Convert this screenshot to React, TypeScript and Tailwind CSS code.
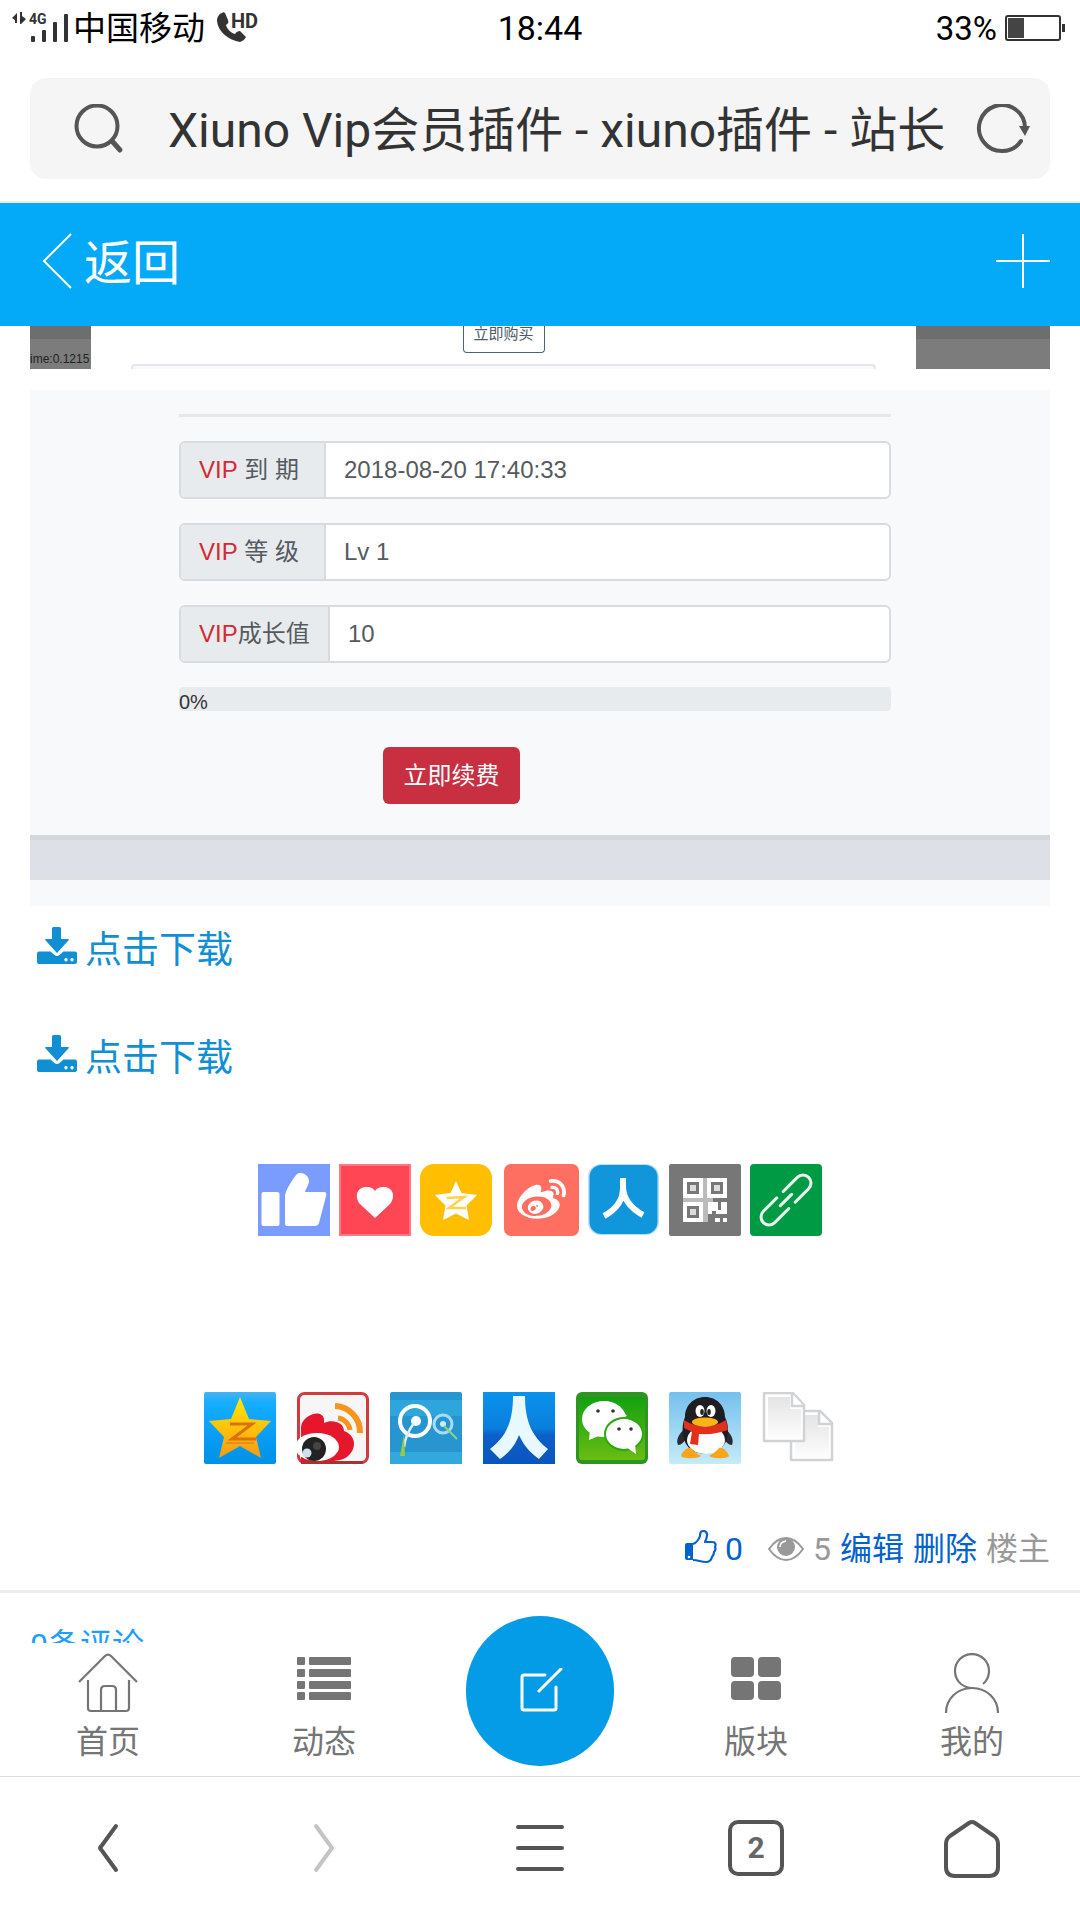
import React from "react";
import { FaWeibo } from "react-icons/fa";

const UI_FONT = "font-['Roboto','Noto_Sans_CJK_SC',sans-serif]";
const SHOT_FONT = "font-['Liberation_Sans','Noto_Sans_CJK_SC',sans-serif]";

/* ---------- status bar ---------- */

function StatusBar() {
  return (
    <div className="grid h-14 shrink-0 grid-cols-3 items-center px-3 text-[33px] leading-none text-black">
      <div className="flex items-center gap-1">
        <svg width="57" height="32" viewBox="0 0 57 32" fill="#333" aria-hidden="true">
          <path d="M0 6l5-5v10h-2v-3zM8 0h2v4l4 3-5 5H8z" />
          <text x="17" y="12" fontSize="14" fontWeight="700" fontFamily="Roboto">4G</text>
          <rect x="19" y="24" width="4" height="6" rx="1" />
          <rect x="30" y="18" width="4" height="12" rx="1" />
          <rect x="41" y="10" width="4" height="20" rx="1" />
          <rect x="52" y="2" width="4" height="28" rx="1" />
        </svg>
        <span className="whitespace-nowrap">中国移动</span>
        <svg className="ml-2" width="41" height="32" viewBox="0 0 41 32" fill="#333" aria-hidden="true">
          <path d="M5 1C2 2 0 5 0 9c1 11 12 19 23 21 3-1 5-3 6-5l-6-6c-2 0-4 1-5 3-4-1-8-5-9-9 2-1 3-3 2-5L8 1C7 0 6 0 5 1z" />
          <text x="14" y="16" fontSize="20" fontWeight="700" fontFamily="Roboto">HD</text>
        </svg>
      </div>
      <time className="text-center text-[34px]">18:44</time>
      <div className="flex items-center justify-end gap-2">
        <span>33%</span>
        <svg className="mr-0.5" width="61" height="26" viewBox="0 0 61 26" aria-hidden="true">
          <rect x="1" y="1" width="54" height="24" rx="2" fill="#fff" stroke="#333" strokeWidth="2" />
          <rect x="3" y="3" width="16" height="20" fill="#444" />
          <rect x="57" y="9" width="3" height="8" fill="#333" />
        </svg>
      </div>
    </div>
  );
}

function AddressBar() {
  return (
    <div className="shrink-0 border-b-2 border-[#ececec] px-[30px] pt-[22px] pb-[22px]">
      <div className="flex h-[101px] items-center rounded-2xl bg-[#f5f5f5] px-5 pl-11">
        <svg width="50" height="50" viewBox="0 0 50 50" fill="none" stroke="#555" strokeWidth="4" strokeLinecap="round" aria-hidden="true">
          <circle cx="23" cy="22" r="20.5" />
          <path d="M38 37l8 9" strokeWidth="5" />
        </svg>
        <input
          aria-label="网址"
          className="ml-11 min-w-0 flex-1 bg-transparent pt-1 text-[48px] leading-[64px] text-[#333] outline-none"
          defaultValue="Xiuno Vip会员插件 - xiuno插件 - 站长"
        />
        <button aria-label="刷新" className="ml-2">
          <svg width="54" height="50" viewBox="0 0 54 50" aria-hidden="true">
            <path d="M49 24A23 23 0 1 0 45 37" fill="none" stroke="#555" strokeWidth="4" strokeLinecap="round" />
            <path d="M43 22h11l-5 10z" fill="#555" />
          </svg>
        </button>
      </div>
    </div>
  );
}

function Header() {
  return (
    <header className="flex h-[123px] shrink-0 items-center justify-between bg-[#04a9f8] px-[30px] pb-2 text-white">
      <a href="#back" className="flex items-center gap-3 pl-3 text-[48px] leading-none">
        <svg width="30" height="56" viewBox="0 0 30 56" fill="none" stroke="currentColor" strokeWidth="2" aria-hidden="true">
          <path d="M29 1L2 28l27 27" />
        </svg>
        <span className="pt-1.5">返回</span>
      </a>
      <button aria-label="添加">
        <svg width="54" height="54" viewBox="0 0 54 54" stroke="currentColor" strokeWidth="2" aria-hidden="true">
          <path d="M0 27h54M27 0v54" />
        </svg>
      </button>
    </header>
  );
}

/* ---------- post body ---------- */

function PurchaseShot() {
  return (
    <div className={`flex h-[43px] justify-between overflow-hidden ${SHOT_FONT}`}>
      <div className="flex w-[61px] items-end overflow-hidden border-t-[13px] border-[#6c6e70] bg-[#7c7c7c] pb-1 text-[12px] leading-none text-[#222]">
        ime:0.1215
      </div>
      <div className="flex flex-1 flex-col items-center justify-between px-10">
        <button className="w-[82px] rounded-b border border-t-0 border-[#4b6478] pb-2.5 text-[15px] leading-4 text-[#4b5a68]">
          立即购买
        </button>
        <div className="h-[5px] w-full rounded-t border-2 border-b-0 border-[#e3e6ea] bg-[#f8f9fb]" />
      </div>
      <div className="w-[134px] border-t-[13px] border-[#6c6e70] bg-[#7c7c7c]" />
    </div>
  );
}

const fields = [
  { id: "expire", label: " 到 期", value: "2018-08-20 17:40:33", wide: false },
  { id: "level", label: " 等 级", value: "Lv 1", wide: false },
  { id: "growth", label: "成长值", value: "10", wide: true },
];

function VipShot() {
  return (
    <div className={`mt-[21px] bg-[#f8f9fb] pt-6 pb-[26px] text-[24px] text-[#555a60] ${SHOT_FONT}`}>
      <div className="ml-[149px] mr-[159px]">
        <div className="h-[3px] bg-[#e6e7ea]" />
        <div className="mt-6 flex flex-col gap-6">
          {fields.map((f) => (
            <div key={f.id} className="flex h-[58px] overflow-hidden rounded-md border-2 border-[#d8dbdf] bg-white">
              <label
                htmlFor={f.id}
                className={`flex items-center whitespace-pre border-r-2 border-[#d8dbdf] bg-[#e8ebee] pl-[18px] ${f.wide ? "w-[149px]" : "w-[145px]"}`}
              >
                <span className="text-[#d42a35]">VIP</span>
                {f.label}
              </label>
              <input id={f.id} readOnly defaultValue={f.value} className="min-w-0 flex-1 pl-[18px] outline-none" />
            </div>
          ))}
        </div>
        <div role="progressbar" aria-label="VIP成长值" aria-valuenow={0} className="mt-6 h-6 rounded bg-[#e8ebee] pt-1 text-[20px] leading-[22px] text-[#333]">
          0%
        </div>
        <button className="mt-9 ml-[204px] block h-[57px] w-[137px] rounded-md bg-[#c82f40] text-white">立即续费</button>
      </div>
      <div className="mt-[31px] h-[45px] border-t-[5px] border-b-2 border-t-[#d5d7db] border-b-[#dfe0e2] bg-[#dde0e6]" />
    </div>
  );
}

function Download() {
  return (
    <a href="#download" className="flex h-[108px] items-start gap-2 pl-[7px] text-[37px] leading-[54px] text-[#118fd4]">
      <svg className="mt-[3px]" width="40" height="37" viewBox="0 0 40 37" fill="currentColor" aria-hidden="true">
        <path d="M15 1.500q0-1.500 1.500-1.500h6q1.500 0 1.500 1.500V12h7q1.500 0 .6 1.200L20 26 8.400 13.200Q7.500 12 9 12h6z" />
        <path fillRule="evenodd" d="M2 24.500h11.500l4 3.600q2.500 1.800 5 0l4-3.600H38q2 0 2 2V35q0 2-2 2H2q-2 0-2-2v-8.500q0-2 2-2zM29 31a1.700 1.700 0 1 0 .01 0zM35 31a1.700 1.700 0 1 0 .01 0z" />
      </svg>
      点击下载
    </a>
  );
}

/* ---------- share icons ---------- */

function Tile({ label, children }: { label: string; children: React.ReactNode }) {
  return (
    <a href="#share" aria-label={label} className="block size-[72px]">
      <svg width="72" height="72" viewBox="0 0 72 72" aria-hidden="true">{children}</svg>
    </a>
  );
}

function ShareRowFlat() {
  return (
    <div className="flex justify-center gap-[9px]">
      <Tile label="赞">
        <rect width="72" height="72" fill="#7a9bff" />
        <rect x="3.500" y="28" width="18" height="34" rx="2" fill="#fff" />
        <path fill="#fff" d="M27 60V31c2-7 7-15 12-21 4-3 12 1 12 7 0 4-3 7-4 11h19q3 0 2.300 3L61 59q-1 3-4 3H29q-2 0-2-2z" />
      </Tile>
      <Tile label="喜欢">
        <rect width="72" height="72" fill="#ff7785" />
        <rect x="2" y="2" width="68" height="68" fill="#ff4655" />
        <path fill="#fff" d="M36 54L21 40c-6-7-3-17 6-17 5 0 7 1 9 4 2-3 4-4 9-4 9 0 12 10 6 17z" />
      </Tile>
      <Tile label="QQ空间">
        <rect width="72" height="72" rx="14" fill="#ffbf00" />
        <path fill="#fff" d="M36 17l5.500 12L57 31 46.500 41.500 49 56l-13-6.500L23 56l2.500-14.500L15 31l15.500-2z" />
        <path d="M27 34l17-1-15 11h17" fill="none" stroke="#ffd24d" strokeWidth="2.500" />
      </Tile>
      <a href="#share" aria-label="微博" className="ml-[3px] block">
        <svg width="75" height="72" viewBox="0 0 75 72" aria-hidden="true">
          <rect width="75" height="72" rx="7" fill="#ff6f61" />
          <FaWeibo x={13} y={12} size={49} color="#fff" />
        </svg>
      </a>
      <Tile label="人人网">
        <rect width="71" height="71" rx="13" fill="#b9dff5" />
        <rect x="1.500" y="1" width="68" height="69" rx="12" fill="#1296db" />
        <path d="M35 14v10c0 13-8 22-19 28M35 24c1 13 9 21 20 27" fill="none" stroke="#fff" strokeWidth="6" />
      </Tile>
      <Tile label="二维码">
        <rect width="72" height="72" rx="2" fill="#777" />
        <path fill="#bbb" d="M33 14h6v44h-6zM14 33h30v6H14z" />
        {[[14, 14], [38, 14], [14, 38]].map(([x, y]) => (
          <g key={`${x}-${y}`} transform={`translate(${x} ${y})`}>
            <rect width="20" height="20" fill="#fff" />
            <rect x="4" y="4" width="12" height="12" fill="#777" />
            <rect x="7" y="7" width="6" height="6" fill="#ddd" />
          </g>
        ))}
        <path fill="#fff" d="M39 38h10v8h3v-8h6v12H47v-3h-4v3h-4zM46 54h5v4h-5zM54 54h4v4h-4z" />
      </Tile>
      <Tile label="复制链接">
        <rect width="72" height="72" rx="4" fill="#009a44" />
        <g transform="translate(36 36) rotate(-45)" fill="none" stroke="#e9f7ee" strokeWidth="3" strokeLinecap="round">
          <path d="M-5-8h-19a8 8 0 0 0 0 16H-4M5 8h19a8 8 0 0 0 0-16H4M-8 0H8" />
        </g>
      </Tile>
    </div>
  );
}

function ShareRowGlossy() {
  return (
    <div className="mr-[42px] flex justify-center gap-[21px]">
      <Tile label="QQ空间">
        <defs>
          <linearGradient id="sky" x2="0" y2="1"><stop offset="0" stopColor="#46b3f2" /><stop offset=".15" stopColor="#14adff" /><stop offset="1" stopColor="#0090e8" /></linearGradient>
          <linearGradient id="gold" x2="0" y2="1"><stop offset="0" stopColor="#ffe800" /><stop offset=".5" stopColor="#ffc20a" /><stop offset="1" stopColor="#f39a13" /></linearGradient>
        </defs>
        <rect width="72" height="72" rx="2" fill="url(#sky)" />
        <path fill="url(#gold)" d="M36 5l9 22 22 2-15 16 5 21-21-12-21 12 5-21L5 29l22-2z" />
        <path d="M26 32h22L28 47h24" fill="none" stroke="#d9720b" strokeWidth="3" />
        <path d="M22 51h28" stroke="#f08a1a" strokeWidth="2" />
      </Tile>
      <Tile label="新浪微博">
        <rect x="1.500" y="1.500" width="69" height="69" rx="6" fill="#f6f6f6" stroke="#d23b3b" strokeWidth="3" />
        <path fill="#e6162d" d="M4 35c1-9 12-15 19-13 5 2 4 7 4 9 8-4 20-1 20 8 11 4 13 15 6 23-4 5-11 7-19 7H4z" />
        <ellipse cx="20" cy="55" rx="22" ry="14" fill="#fff" />
        <path d="M4 70.500h62" stroke="#a83232" strokeWidth="3" />
        <circle cx="17" cy="57" r="12" fill="#222" />
        <circle cx="20" cy="54" r="4" fill="#444" />
        <circle cx="10" cy="61" r="4.500" fill="#cfe0ea" />
        <path d="M38 14a26 26 0 0 1 25 27" fill="none" stroke="#f7941d" strokeWidth="6" />
        <path d="M41 26a14 14 0 0 1 12 12" fill="none" stroke="#f7941d" strokeWidth="5" />
      </Tile>
      <Tile label="腾讯微博">
        <rect width="72" height="72" rx="2" fill="#2795cf" />
        <rect y="8" width="72" height="16" fill="#2ea6dc" />
        <rect y="60" width="72" height="12" fill="#31a9dd" />
        <circle cx="25" cy="29" r="15" fill="none" stroke="#fff" strokeWidth="4" />
        <circle cx="26" cy="29" r="5" fill="#fff" />
        <path d="M24 31c-6 8-9 15-10 24" fill="none" stroke="#dff0f4" strokeWidth="2.500" />
        <path d="M14 42l-4 22h5z" fill="#8fcf45" />
        <circle cx="53" cy="32" r="9" fill="none" stroke="#a9dcf3" strokeWidth="3" />
        <circle cx="53" cy="32" r="3" fill="#c9ebf8" />
        <path d="M54 34l13 13" stroke="#8fcf8a" strokeWidth="2" />
      </Tile>
      <Tile label="人人网">
        <defs><linearGradient id="navy" x2="0" y2="1"><stop offset="0" stopColor="#0a93ec" /><stop offset=".5" stopColor="#0a7fdc" /><stop offset=".6" stopColor="#0b60c9" /><stop offset="1" stopColor="#0a55bd" /></linearGradient></defs>
        <rect width="72" height="72" fill="url(#navy)" />
        <path fill="#e8f9ff" d="M30 4h12c0 27 8 41 23 53l-9 10c-10-7-16-15-20-24-3 9-9 17-19 24L7 57C23 45 30 30 30 4z" />
      </Tile>
      <Tile label="微信">
        <defs><linearGradient id="leaf" x2="0" y2="1"><stop offset="0" stopColor="#12a10f" /><stop offset="1" stopColor="#69bd13" /></linearGradient></defs>
        <rect width="72" height="72" rx="6" fill="#2f9421" />
        <rect x="3" y="5" width="66" height="63" rx="3" fill="url(#leaf)" />
        <ellipse cx="28" cy="27" rx="22" ry="18" fill="#fff" />
        <path d="M14 38l-1 10 12-5zM44 16l7 8-9 2z" fill="#fff" />
        <ellipse cx="48" cy="42" rx="20" ry="17" fill="#2da812" />
        <ellipse cx="48" cy="42" rx="18" ry="15" fill="#fff" />
        <path d="M50 55l10 7-1-11z" fill="#fff" />
        <g fill="#333"><circle cx="22" cy="19" r="1.800" /><circle cx="37" cy="19" r="1.800" /><circle cx="43" cy="37" r="1.800" /><circle cx="55" cy="37" r="1.800" /></g>
      </Tile>
      <Tile label="QQ好友">
        <defs><linearGradient id="ice" x2="0" y2="1"><stop offset="0" stopColor="#74c0ee" /><stop offset="1" stopColor="#c5ebfa" /></linearGradient></defs>
        <rect width="72" height="72" rx="2" fill="url(#ice)" />
        <path d="M17 36c-8 6-10 12-8 17 4 0 8-5 9-9zM55 36c8 6 10 12 8 17-4 0-8-5-9-9z" fill="#2a2a33" />
        <path d="M36 5c12 0 20 9 20 20 6 12 5 36-20 37C12 61 11 37 16 25 16 14 24 5 36 5z" fill="#1d1d22" />
        <ellipse cx="37" cy="48" rx="19" ry="14" fill="#fff" />
        <ellipse cx="31" cy="19" rx="4.500" ry="6" fill="#fff" />
        <ellipse cx="42" cy="19" rx="4.500" ry="6" fill="#fff" />
        <ellipse cx="33" cy="20" rx="1.800" ry="3" fill="#222" />
        <ellipse cx="40" cy="20" rx="1.800" ry="3" fill="#222" />
        <path d="M15 28q21 13 42 0l2 10q-13 5-29 4l-1 11-8-1 2-12-8-4z" fill="#e3301c" />
        <ellipse cx="36" cy="30" rx="13" ry="4.500" fill="#fbb416" />
        <path d="M12 64c1-4 6-9 10-8 3 4 7 6 10 8-4 3-18 3-20 0zM60 64c-1-4-6-9-10-8-3 4-7 6-10 8 4 3 18 3 20 0z" fill="#f9a51a" />
      </Tile>
      <Tile label="复制">
        <defs><linearGradient id="paper" x2="0" y2="1"><stop offset="0" stopColor="#e4e4e4" /><stop offset="1" stopColor="#fdfdfd" /></linearGradient></defs>
        <g stroke="#d0d3d6" strokeWidth="2.500" strokeLinejoin="round">
          <path d="M29 19h29l12 12v37H29z" fill="#fff" />
          <path d="M33 23h23v12h11v30H33z" fill="url(#paper)" stroke="none" />
          <path d="M57 20v12h12" fill="#fff" />
          <path d="M2 1h29l11 12v36H2z" fill="#fff" />
          <path d="M6 5h22v12h11v29H6z" fill="url(#paper)" stroke="none" />
          <path d="M30 2v12h12" fill="#fff" />
        </g>
      </Tile>
    </div>
  );
}

function PostMeta() {
  return (
    <div className="flex items-center justify-end gap-[9px] text-[32px] leading-[48px] text-[#999]">
      <a href="#like" className="mr-4 flex items-center gap-2 text-[#0062d0]">
        <svg className="-mt-1" width="32" height="34" viewBox="0 0 32 34" aria-hidden="true">
          <path d="M2 13h6v17H2q-2 0-2-2V15q0-2 2-2z" fill="currentColor" />
          <circle cx="4" cy="27" r="1.300" fill="#fff" />
          <path d="M8 14c3-1 6-5 7-8 0-3 1-5 3-5 5 0 5 5 2 11h7c4 0 4 3 3 5 1 2 0 4-1 5 0 3-1 4-2 5-1 4-3 5-6 5-5 0-8-2-13-2" fill="none" stroke="currentColor" strokeWidth="2.200" strokeLinejoin="round" />
        </svg>
        0
      </a>
      <span className="flex items-center gap-[9px]">
        <svg width="36" height="24" viewBox="0 0 36 24" aria-hidden="true">
          <path d="M1 12C8 2 14 1 18 1s10 1 17 11C28 22 22 23 18 23S8 22 1 12z" fill="none" stroke="#999" strokeWidth="2" />
          <circle cx="18" cy="10" r="9" fill="#999" />
          <path d="M12 10q0-5 6-6" fill="none" stroke="#fff" strokeWidth="1.500" />
        </svg>
        5
      </span>
      <a href="#edit" className="text-[#0062d0]">编辑</a>
      <a href="#delete" className="text-[#0062d0]">删除</a>
      <span>楼主</span>
    </div>
  );
}

/* ---------- bottom bars ---------- */

function NavItem({ label, children }: { label: string; children: React.ReactNode }) {
  return (
    <a href="#nav" className="flex flex-col items-center gap-2 pt-2.5 text-[32px] leading-[42px] text-[#757575]">
      <svg width="60" height="60" viewBox="0 0 60 60" fill="none" stroke="currentColor" strokeWidth="2.200" aria-hidden="true">{children}</svg>
      {label}
    </a>
  );
}

function SiteNav() {
  return (
    <nav className="relative grid h-[134px] shrink-0 grid-cols-5 border-b border-[#ddd] bg-white">
      <NavItem label="首页">
        <path d="M1 29L27 3q3-3 6 0l26 26M10 27v28q0 3 3 3h35q3 0 3-3V27M23 58V37q0-4 4-4h7q4 0 4 4v21" />
      </NavItem>
      <NavItem label="动态">
        <g fill="currentColor" stroke="none">
          {[4, 16, 28, 39].map((y) => (
            <g key={y}><rect x="3" y={y} width="8" height="8" rx="1" /><rect x="15" y={y} width="42" height="8" rx="1" /></g>
          ))}
        </g>
      </NavItem>
      <button aria-label="发帖" className="-mt-[27px] flex h-[150px] w-[148px] items-center justify-center justify-self-center rounded-full bg-[#049be7]">
        <svg width="46" height="46" viewBox="0 0 46 46" fill="none" stroke="#fff" strokeWidth="3" strokeLinecap="round" strokeLinejoin="round" aria-hidden="true">
          <path d="M28 7H7q-2 0-2 2v31q0 2 2 2h30q2 0 2-2V19M22 23L44 1" />
        </svg>
      </button>
      <NavItem label="版块">
        <g fill="currentColor" stroke="none">
          <rect x="5" y="4" width="23" height="20" rx="4" /><rect x="32" y="4" width="23" height="20" rx="4" />
          <rect x="5" y="28" width="23" height="19" rx="4" /><rect x="32" y="28" width="23" height="19" rx="4" />
        </g>
      </NavItem>
      <NavItem label="我的">
        <path d="M41 31a17 17 0 1 0-22 0q5 4 11 4M4 60C4 46 15 35 30 35s26 11 26 25" />
      </NavItem>
    </nav>
  );
}

function BrowserBar() {
  const items = [
    { label: "后退", color: "text-[#555]", art: <path d="M38 8L22 30l16 22" /> },
    { label: "前进", color: "text-[#c4c4c4]", art: <path d="M22 8l16 22-16 22" /> },
    { label: "菜单", color: "text-[#555]", art: <path d="M8 9h44M8 30h44M8 51h44" /> },
  ];
  return (
    <div className="grid h-[143px] shrink-0 grid-cols-5 items-center bg-white pb-0.5">
      {items.map((i) => (
        <button key={i.label} aria-label={i.label} className={`justify-self-center ${i.color}`}>
          <svg width="60" height="60" viewBox="0 0 60 60" fill="none" stroke="currentColor" strokeWidth="4" strokeLinecap="round" strokeLinejoin="round" aria-hidden="true">{i.art}</svg>
        </button>
      ))}
      <button className="flex size-14 items-center justify-center justify-self-center rounded-[10px] border-4 border-[#555] text-[30px] leading-none font-bold text-[#666]">2</button>
      <button aria-label="主页" className="justify-self-center">
        <svg width="60" height="60" viewBox="0 0 60 60" fill="none" stroke="#555" strokeWidth="4" strokeLinejoin="round" aria-hidden="true">
          <path d="M27 5q3-2 6 0l19 13q4 3 4 8v23q0 9-9 9H13q-9 0-9-9V26q0-5 4-8z" />
        </svg>
      </button>
    </div>
  );
}

export default function App() {
  return (
    <div className={`flex h-screen flex-col overflow-hidden bg-white ${UI_FONT}`}>
      <StatusBar />
      <AddressBar />
      <Header />
      <main className="min-h-0 flex-1 overflow-hidden">
        <article className="border-b-[3px] border-[#eee] px-[30px]">
          <PurchaseShot />
          <VipShot />
          <div className="pt-[18px]">
            <Download />
            <Download />
          </div>
          <div className="pt-6"><ShareRowFlat /></div>
          <div className="pt-[156px]"><ShareRowGlossy /></div>
          <div className="pt-[61px] pb-[17px]"><PostMeta /></div>
        </article>
        <section className="px-[30px] pt-7">
          <h2 className="text-[32px] leading-[48px] text-[#1e9fff]">0条评论</h2>
        </section>
      </main>
      <SiteNav />
      <BrowserBar />
    </div>
  );
}
